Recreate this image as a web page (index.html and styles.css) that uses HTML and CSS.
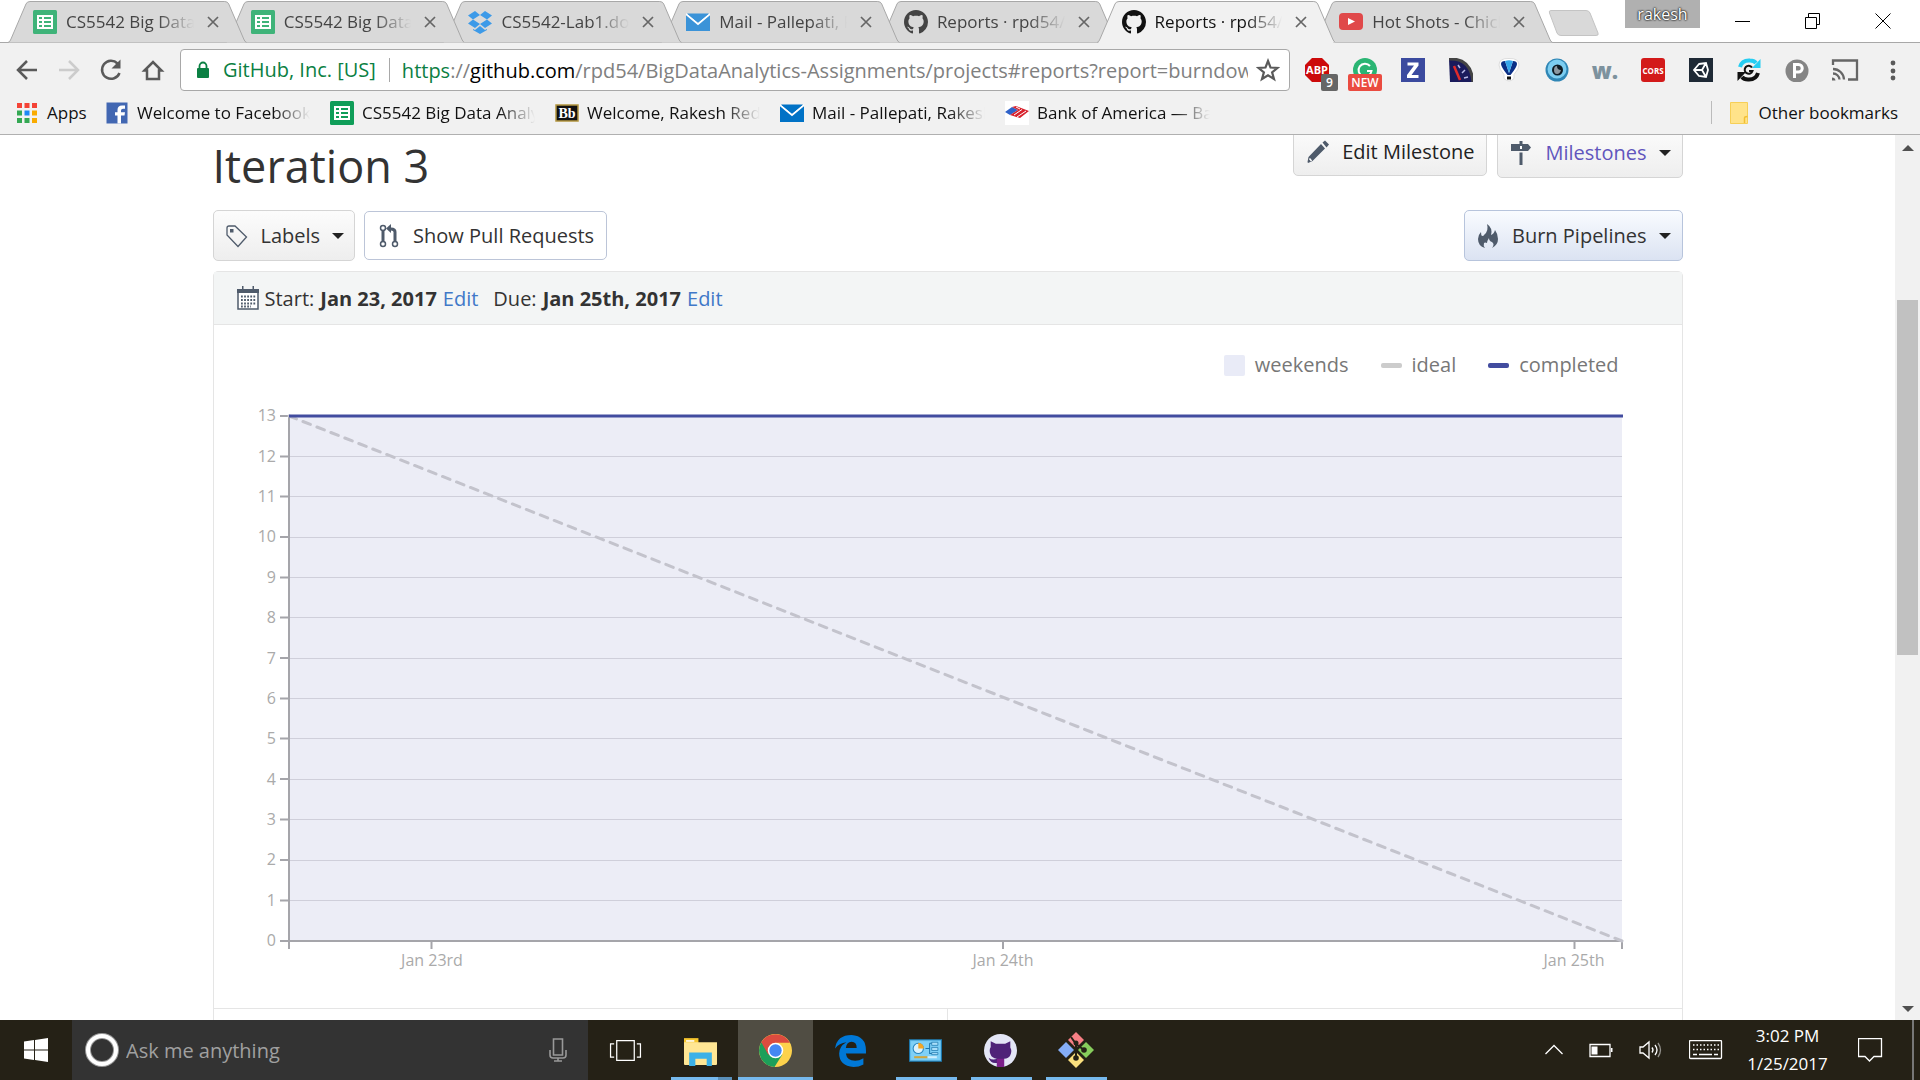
FILE: index.html
```html
<!DOCTYPE html>
<html lang="en">
<head>
<meta charset="utf-8">
<title>Reports · rpd54/BigDataAnalytics-Assignments</title>
<link rel="stylesheet" href="styles.css">
</head>
<body>
<svg class="defs" aria-hidden="true">
  <symbol id="tab-shape" viewBox="0 0 239 43" preserveAspectRatio="none"><path d="M0 42.500Q2 42 3 39L18 4Q19 1.500 22 1.500H217Q220 1.500 221 4L236 39Q237 42 239 42.500" vector-effect="non-scaling-stroke"/></symbol>
  <symbol id="x" viewBox="0 0 12 12"><path d="M1 1l10 10M11 1L1 11" fill="none" stroke="currentColor" stroke-width="1.700"/></symbol>
  <symbol id="sheet" viewBox="0 0 24 24"><rect width="24" height="24" rx="1.500" fill="currentColor"/><path d="M4 5h16v14H4z" fill="#fff"/><path d="M6 7h3v2H6zM11 7h7v2h-7zM6 11h3v2H6zM11 11h7v2h-7zM6 15h3v2H6zM11 15h7v2h-7z" fill="currentColor"/></symbol>
  <symbol id="mail" viewBox="0 0 24 24"><path d="M0 4h24v17H0z" fill="currentColor"/><path d="M0 4l12 10L24 4" fill="none" stroke="#fff" stroke-width="2"/><path d="M1 3.500h22L12 12.500z" fill="currentColor"/></symbol>
  <symbol id="octo" viewBox="0 0 16 16"><path fill="currentColor" d="M8 0C3.580 0 0 3.580 0 8c0 3.540 2.290 6.530 5.470 7.590.4.070.55-.17.55-.38 0-.19-.01-.82-.01-1.490-2.010.37-2.530-.49-2.690-.94-.09-.23-.48-.94-.82-1.130-.28-.15-.68-.52-.01-.53.63-.01 1.080.58 1.230.82.72 1.210 1.870.87 2.330.66.070-.52.28-.87.51-1.070-1.780-.2-3.640-.89-3.640-3.950 0-.87.31-1.590.82-2.150-.08-.2-.36-1.020.08-2.120 0 0 .67-.21 2.200.82.64-.18 1.320-.27 2-.27s1.360.09 2 .27c1.530-1.040 2.200-.82 2.200-.82.44 1.100.16 1.920.08 2.120.51.56.82 1.270.82 2.150 0 3.070-1.870 3.750-3.650 3.950.29.25.54.73.54 1.480 0 1.070-.01 1.930-.01 2.200 0 .21.150.46.55.38A8.010 8.010 0 0 0 16 8c0-4.420-3.580-8-8-8z"/></symbol>
</svg>

<header class="tabstrip">
  <div class="tabs" role="tablist">
    <div class="tab t1" role="tab"><svg class="shape"><use href="#tab-shape"/></svg><svg class="fav green"><use href="#sheet"/></svg><span class="label">CS5542 Big Data Analytics</span><button class="close" aria-label="Close tab"><svg><use href="#x"/></svg></button></div>
    <div class="tab t2" role="tab"><svg class="shape"><use href="#tab-shape"/></svg><svg class="fav green"><use href="#sheet"/></svg><span class="label">CS5542 Big Data Analytics</span><button class="close" aria-label="Close tab"><svg><use href="#x"/></svg></button></div>
    <div class="tab t3" role="tab"><svg class="shape"><use href="#tab-shape"/></svg><svg class="fav" viewBox="0 0 24 24"><path fill="#3d9ae8" d="M7 1l5 4-7 4.500L0 5.500zM17 1l7 4.500-5 4L12 5zM0 13.500l5-4 7 4.500-5 4zM19 9.500l5 4-7 4.500-5-4zM5 19l2 1 5-4 5 4 2-1v1l-7 4-7-4z"/></svg><span class="label">CS5542-Lab1.docx</span><button class="close" aria-label="Close tab"><svg><use href="#x"/></svg></button></div>
    <div class="tab t4" role="tab"><svg class="shape"><use href="#tab-shape"/></svg><svg class="fav blue"><use href="#mail"/></svg><span class="label">Mail - Pallepati, Rakesh</span><button class="close" aria-label="Close tab"><svg><use href="#x"/></svg></button></div>
    <div class="tab t5" role="tab"><svg class="shape"><use href="#tab-shape"/></svg><svg class="fav"><use href="#octo"/></svg><span class="label">Reports · rpd54/BigData</span><button class="close" aria-label="Close tab"><svg><use href="#x"/></svg></button></div>
    <div class="tab t6 active" role="tab" aria-selected="true"><svg class="shape"><use href="#tab-shape"/></svg><svg class="fav"><use href="#octo"/></svg><span class="label">Reports · rpd54/BigData</span><button class="close" aria-label="Close tab"><svg><use href="#x"/></svg></button></div>
    <div class="tab t7" role="tab"><svg class="shape"><use href="#tab-shape"/></svg><svg class="fav" viewBox="0 0 24 24"><rect y="3" width="24" height="17" rx="4" fill="#e0494a"/><path d="M9 8l7 3.500L9 15z" fill="#fff"/></svg><span class="label">Hot Shots - Chick</span><button class="close" aria-label="Close tab"><svg><use href="#x"/></svg></button></div>
  </div>
  <button class="newtab" aria-label="New tab"><svg viewBox="0 0 52 26"><path d="M3 .500H38Q41 .500 42 3L50 23Q51 25.500 48 25.500H13Q10 25.500 9 23L1.500 3Q.500 .500 3 .500z" fill="#d9d9d9" stroke="#c4c4c4"/></svg></button>
  <button class="profile">rakesh</button>
  <div class="winctl">
    <button aria-label="Minimize"><svg viewBox="0 0 16 16"><path d="M0 8.500h15"/></svg></button>
    <button aria-label="Restore"><svg viewBox="0 0 16 16"><path d="M.500 4.500h11v11H.500zM3.500 4V.500h11v11H12"/></svg></button>
    <button aria-label="Close"><svg viewBox="0 0 16 16"><path d="M.500 .500l15 15M15.500 .500l-15 15"/></svg></button>
  </div>
</header>

<nav class="toolbar" aria-label="Browser">
  <div class="navbtns">
    <button aria-label="Back"><svg viewBox="0 0 24 24"><path d="M22 12H3M12 3L3 12l9 9"/></svg></button>
    <button class="off" aria-label="Forward" disabled><svg viewBox="0 0 24 24"><path d="M2 12h19M12 3l9 9-9 9"/></svg></button>
    <button aria-label="Reload"><svg viewBox="0 0 24 24"><path d="M20.500 15A9 9 0 1 1 18.500 5.500"/><path d="M21.500 1.500v9h-9z" fill="currentColor" stroke="none"/></svg></button>
    <button aria-label="Home"><svg viewBox="0 0 24 24"><path d="M3.500 12.500L12 4l8.500 8.500H18V21H6v-8.500z"/></svg></button>
  </div>
  <div class="omnibox">
    <svg class="lock" viewBox="0 0 14 18"><rect x="1" y="7" width="12" height="10" rx="1" fill="currentColor"/><path d="M3.500 8V5a3.500 3.500 0 0 1 7 0v3" fill="none" stroke="currentColor" stroke-width="1.800"/></svg>
    <span class="site">GitHub, Inc. [US]</span>
    <div class="url" role="textbox" contenteditable="true" aria-label="Address"><span class="scheme">https</span>://<span class="host">github.com</span>/rpd54/BigDataAnalytics-Assignments/projects#reports?report=burndown</div>
    <button class="star" aria-label="Bookmark"><svg viewBox="0 0 24 24"><path d="M12 3l2.500 6.500 7 .400-5.400 4.400 1.900 6.700-6-3.800-6 3.800 1.900-6.700L2.500 9.900l7-.400z" fill="none" stroke="#5a5a5a" stroke-width="2.200"/></svg></button>
  </div>
  <div class="exts">
    <button aria-label="Adblock Plus"><svg viewBox="0 0 24 24"><path d="M7 0h10l7 7v10l-7 7H7l-7-7V7z" fill="#cc0a0a"/><text x="12" y="16" class="g-abp">ABP</text></svg><span class="badge count">9</span></button>
    <button aria-label="Grammarly"><svg viewBox="0 0 24 24"><circle cx="12" cy="12" r="12" fill="#2ab573"/><path d="M17 8a6.500 6.500 0 1 0 1.500 5H14" fill="none" stroke="#fff" stroke-width="2"/></svg><span class="badge new">NEW</span></button>
    <button aria-label="Zotero"><svg viewBox="0 0 24 24"><path d="M0 0h24v24H0z" fill="#3b4a9f"/><path d="M6.500 4.500h11v3L10.500 17h7v3H6v-3L13 7.500H6.500z" fill="#fff"/></svg></button>
    <button aria-label="Speed dial"><svg viewBox="0 0 24 24"><path d="M0 1Q22 0 24 24H1z" fill="#1a1b5c"/><path d="M0 1Q22 0 24 24" fill="none" stroke="#444" stroke-width="3"/><path d="M5 8l6 14" stroke="#e02b2b" stroke-width="2.500"/><path d="M9 7l2 3M16 12l-3 3M19 19l-4 1" stroke="#b9bbe8" stroke-width="1.500"/></svg></button>
    <button aria-label="Balloon"><svg viewBox="0 0 24 24"><path d="M2 7Q2 0 12 .500 22 0 22 7q0 4-5 9.500v4q-5 5-10 0v-4Q2 11 2 7z" fill="#fff" stroke="#ddd"/><path d="M4 6Q4 3 8 3l4 12 4-12q4 0 4 3 0 3-6.500 11h-3Q4 9 4 6z" fill="#0a2f86"/><path d="M8 3q4-1.500 8 0l-4 12z" fill="#36a6ea"/><path d="M10 18.500h4v3h-4z" fill="#111"/></svg></button>
    <button aria-label="Eye"><svg viewBox="0 0 24 24"><circle cx="12" cy="12" r="11.500" fill="#2f86b5"/><circle cx="12" cy="11" r="9.500" fill="#7ccdf0"/><circle cx="12.500" cy="12" r="5.500" fill="#0d1b24"/><path d="M12 8q0 4 4 4-1 4-4 4t-3-4 3-4" fill="#8c98a0"/></svg></button>
    <button aria-label="W"><span class="g-w">w.</span></button>
    <button aria-label="CORS"><svg viewBox="0 0 24 24"><rect width="24" height="24" rx="3" fill="#d31a1a"/><text x="12" y="16" class="g-cors">CORS</text></svg></button>
    <button aria-label="Cube"><svg viewBox="0 0 24 24"><path d="M0 0h24v24H0z" fill="#1f2a36"/><path d="M10 6l7-1 2 7-2 7-7-1-5-6zM5 12h8M13 12l4-7M13 12l4 7" fill="none" stroke="#fff" stroke-width="1.800"/></svg></button>
    <button aria-label="Sync"><svg viewBox="0 0 24 24"><path d="M3 9Q5 2 13 2.500q4 0 6 2.500" fill="none" stroke="#25cdf2" stroke-width="4"/><path d="M23.500 1v9H15z" fill="#25cdf2"/><path d="M21 15q-2 7-10 6.500-4 0-6-2.500" fill="none" stroke="#111" stroke-width="4"/><path d="M.500 23v-9H9z" fill="#111"/><path d="M15 9.500a4 4 0 1 0 .500 3.500H12" fill="none" stroke="#111" stroke-width="2"/></svg></button>
    <button aria-label="Pinterest"><svg viewBox="0 0 24 24"><circle cx="12" cy="13" r="11.500" fill="#858585"/><path d="M9.500 20V6.500h4a3.700 3.700 0 0 1 0 7.500h-4" fill="none" stroke="#fff" stroke-width="3"/></svg></button>
    <button aria-label="Cast"><svg class="cast" viewBox="0 0 28 24"><path d="M2 7V2.500h24v19H17M2 11a11 11 0 0 1 11 10.500M2 15.500a6.500 6.500 0 0 1 6.500 6" fill="none" stroke="#666" stroke-width="2.300"/><path d="M1 19.500a3.500 3.500 0 0 1 3.500 3H1z" fill="#666"/></svg></button>
    <button aria-label="Menu"><svg viewBox="0 0 24 24" fill="#5a5a5a"><circle cx="12" cy="5" r="2.400"/><circle cx="12" cy="13" r="2.400"/><circle cx="12" cy="20" r="2.400"/></svg></button>
  </div>
</nav>

<nav class="bookmarks" aria-label="Bookmarks">
  <a class="apps" href="#"><svg viewBox="0 0 20 20"><path fill="#f44336" d="M0 0h5v5H0zM7.500 0h5v5h-5zM15 0h5v5h-5z"/><path fill="#34a853" d="M0 7.500h5v5H0zM0 15h5v5H0zM7.500 15h5v5h-5z"/><path fill="#1e88f5" d="M7.500 7.500h5v5h-5z"/><path fill="#f9ab00" d="M15 7.500h5v5h-5zM15 15h5v5h-5z"/></svg>Apps</a>
  <a class="bm" href="#"><svg viewBox="0 0 24 24"><path d="M1.500 1.500h21v21h-21z" fill="#4267b2"/><path d="M12.500 22.500v-8H10v-3.200h2.500V9q0-4.500 4.500-4.500h3v3.200h-2q-2 0-2 1.800v1.800h4l-.500 3.200H16v8z" fill="#fff"/></svg><span>Welcome to Facebook</span></a>
  <a class="bm sheetgreen" href="#"><svg><use href="#sheet"/></svg><span>CS5542 Big Data Analytics</span></a>
  <a class="bm" href="#"><svg viewBox="0 0 24 24"><path d="M1 4h22v16H1z" fill="#111" stroke="#b3953f" stroke-width="1.500"/><text x="12" y="17" class="g-bb">Bb</text></svg><span>Welcome, Rakesh Reddy</span></a>
  <a class="bm mailblue" href="#"><svg><use href="#mail"/></svg><span>Mail - Pallepati, Rakesh</span></a>
  <a class="bm" href="#"><svg viewBox="0 0 24 24"><path d="M0 0h24v24H0z" fill="#fff"/><path d="M0 11l7-5 6 3-8 5z" fill="#2f62c9"/><path d="M7 6l4-1 13 5-9 7-10-3 8-5z" fill="#d8222d"/><path d="M9 14l8-5.500M12 16l9-6M11 6l4 2" stroke="#fff"/></svg><span>Bank of America — Banking</span></a>
  <a class="other" href="#"><svg viewBox="0 0 18 22"><path d="M.500 .500h17v21H.500z" fill="#ffe38a" stroke="#f6cf57"/><path d="M14.500 21v-5q0-1.500 3-1.500" fill="none" stroke="#f2bf35" stroke-width="1.500"/></svg>Other bookmarks</a>
</nav>

<div class="viewport">
  <main class="content">
    <div class="head">
      <h1>Iteration 3</h1>
      <button class="btn flat dark"><svg viewBox="0 0 24 24"><path fill="#4f5b6b" d="M16.500 2.500L19 .500l4 4-2.500 3zM15 4l4 4.500L6.500 21l-1 .500L2 23l-.500-1 1-5z"/><path d="M3.500 18.500l2 2.500" stroke="#fff" stroke-width="1.500"/></svg>Edit Milestone</button>
      <button class="btn purple"><svg viewBox="0 0 24 24"><path fill="#4f5b6b" d="M10.500 0h3v3h5.500l3 3.500-3 3.500H2V3h8.500zM10.500 11.500h3V24h-3z"/><path d="M11 5h2v3h-2z" fill="#fff"/></svg>Milestones<i class="caret"></i></button>
    </div>
    <div class="filters">
      <button class="btn labels"><svg viewBox="0 0 24 24"><path d="M2 4q0-2 2-2h6l11.500 11L13 22.500 2 11z" fill="none" stroke="#4f5b6b" stroke-width="1.300"/><path d="M5 5h3.500v3.500H5z" fill="#4f5b6b"/></svg>Labels<i class="caret"></i></button>
      <button class="btn flat white"><svg viewBox="0 0 24 24"><path d="M6 5v14" stroke="#4f5b6b" stroke-width="3"/><path d="M18 19V8q0-3-4-3h-2" fill="none" stroke="#4f5b6b" stroke-width="3"/><path d="M14 0v9L9 4.500z" fill="#4f5b6b"/><g fill="#fff" stroke="#4f5b6b" stroke-width="1.500"><circle cx="6" cy="4" r="2.500"/><circle cx="6" cy="20" r="2.500"/><circle cx="18" cy="20" r="2.500"/></g></svg>Show Pull Requests</button>
      <button class="btn burn"><svg viewBox="0 0 24 24"><path fill="#4f5b6b" d="M11 0q6 4 4 11 3-1 4-5 3 4 3 9 0 6-6 9 3-4 0-6-3-1-3-4-2 3-2 5-2-1-3 0-1 3 1 5-7-2-7-9 0-4 3-7 0 3 1 4 2 0 2-1 5-4 3-11z"/></svg>Burn Pipelines<i class="caret"></i></button>
    </div>
    <section class="card">
      <div class="dates">
        <svg viewBox="0 0 22 24"><path d="M1 4h20v19H1z" fill="#fff" stroke="#4f5b6b" stroke-width="1.500"/><path d="M0 3h22v4H0zM5 0h1.500v4H5zM15.500 0H17v4h-1.500z" fill="#4f5b6b"/><path d="M4 10.500h15M4 14h15M4 17.500h15M4 20.500h10" stroke="#4f5b6b" stroke-width="1.800" stroke-dasharray="1.800 1.300"/></svg>
        <span>Start:</span> <b>Jan 23, 2017</b> <a href="#">Edit</a> <span class="due">Due:</span> <b>Jan 25th, 2017</b> <a href="#">Edit</a>
      </div>
      <div class="legend">
        <span><i class="box"></i>weekends</span>
        <span><i class="dash"></i>ideal</span>
        <span><i class="dash done"></i>completed</span>
      </div>
      <svg class="chart" viewBox="0 0 1468 612" role="img" aria-label="Burndown chart">
        <path class="area" d="M75 20h1333v525H75z"/>
        <path class="grid" d="M75 60.500h1333M75 100.500h1333M75 141.500h1333M75 181.500h1333M75 221.500h1333M75 262.500h1333M75 302.500h1333M75 342.500h1333M75 383.500h1333M75 423.500h1333M75 464.500h1333M75 504.500h1333"/>
        <path class="axis" d="M75 19.500V553M66 20h9M66 60.500h9M66 100.500h9M66 141h9M66 181.500h9M66 221.500h9M66 262h9M66 302.500h9M66 342.500h9M66 383h9M66 423.500h9M66 464h9M66 504.500h9M66 545h1342v8M217.500 545v8M789 545v8M1360.500 545v8"/>
        <path class="ideal" d="M75 20L1408 545"/>
        <path class="complete" d="M75 20h1334"/>
        <g class="ylab"><text x="62" y="25">13</text><text x="62" y="66">12</text><text x="62" y="106">11</text><text x="62" y="146">10</text><text x="62" y="187">9</text><text x="62" y="227">8</text><text x="62" y="268">7</text><text x="62" y="308">6</text><text x="62" y="348">5</text><text x="62" y="389">4</text><text x="62" y="429">3</text><text x="62" y="469">2</text><text x="62" y="510">1</text><text x="62" y="550">0</text></g>
        <g class="xlab"><text x="218" y="570">Jan 23rd</text><text x="789" y="570">Jan 24th</text><text x="1360" y="570">Jan 25th</text></g>
      </svg>
      <div class="split"><div></div><div></div></div>
    </section>
  </main>
  <div class="scrollbar"><i class="up"></i><i class="thumb"></i><i class="down"></i></div>
</div>

<footer class="taskbar">
  <button class="start" aria-label="Start"><svg viewBox="0 0 24 24"><path fill="#fff" d="M0 3.400l10-1.400v9.500H0zM11 1.900L24 0v11.500H11zM0 12.500h10V22L0 20.600zM11 12.500h13V24l-13-1.900z"/></svg></button>
  <label class="search">
    <svg class="ring" viewBox="0 0 34 34"><circle cx="17" cy="17" r="14" fill="none" stroke="#999" stroke-width="6"/><circle cx="17" cy="17" r="14" fill="none" stroke="#fff" stroke-width="4"/></svg>
    <input type="text" placeholder="Ask me anything" aria-label="Search">
    <svg class="mic" viewBox="0 0 18 24"><path d="M4.500 1h9v16h-9zM1 12v5q0 3 3 3h10q3 0 3-3v-5M9 20v3M5 23h8" fill="none" stroke="#999" stroke-width="1.600"/></svg>
  </label>
  <div class="apps-row">
    <button aria-label="Task view"><svg viewBox="0 0 32 32"><path d="M7.500 6.500h17v19h-17zM5 9.500H1.500v13H5M27 9.500h3.500v13H27" fill="none" stroke="#fff" stroke-width="1.200"/></svg></button>
    <button class="open multi" aria-label="File Explorer"><svg viewBox="0 0 32 32"><path d="M0 4h14v8H0z" fill="#f7c62f"/><path d="M0 8h32v21q0 1-1 1H1q-1 0-1-1z" fill="#ffe694"/><path d="M2 6h8v1.500H2z" fill="#fff"/><path d="M5 18h22v13h-5v-7H11v7H5z" fill="#3bb1e8"/></svg></button>
    <button class="open current" aria-label="Chrome"><svg viewBox="0 0 32 32"><circle cx="16" cy="16" r="16" fill="#fdd24c"/><path d="M16 16L2.200 8A16 16 0 0 0 15 32l7.500-12z" fill="#1d9f5a"/><path d="M16 8.500H30A16 16 0 0 0 2.200 8L9 20l7-4z" fill="#dc4b3f"/><circle cx="16" cy="16" r="7.500" fill="#fff"/><circle cx="16" cy="16" r="6" fill="#4587f3"/></svg></button>
    <button aria-label="Edge"><svg viewBox="0 0 32 32"><path fill="#0078d7" d="M1 14Q3 1 17 1q14 1 14 15v3H11.500q1 7 9 7 4 0 8-2.500v6Q24 32 19 32 5 31 5 19q0-7 7-11-7 1-11 6zM11.500 13.500H22Q22 7.500 17 7.500q-5 .500-5.500 6z"/></svg></button>
    <button class="open" aria-label="Control Panel"><svg viewBox="0 0 32 32"><path d="M.500 5.500h31v21H.500z" fill="#69c2f0" stroke="#1c75a8"/><path d="M2 7h28v18H2z" fill="#7fd0f7"/><circle cx="9" cy="14" r="5" fill="#d9f1fd" stroke="#2786c0"/><path d="M9 14V8.500a5.500 5.500 0 0 1 5.500 5.500z" fill="#f5a623"/><path d="M16 14h4M20 9v10h3M20 9h3" stroke="#1d76ad" fill="none"/><path d="M22 8h6v3h-6zM22 13h6v3h-6zM22 18h6v2h-6z" fill="#a9def9" stroke="#1d76ad" stroke-width=".7"/><path d="M5 22.500h13" stroke="#d0a63e" stroke-width="2"/><path d="M18 22.500h9" stroke="#cfeefd" stroke-width="2"/></svg></button>
    <button class="open" aria-label="GitHub Desktop"><svg viewBox="0 0 32 32"><circle cx="16" cy="16" r="16" fill="#e4e6f6"/><path fill="#4f2378" d="M6.500 7l5 2.500h9l5-2.500v6q2 3 0 7.500-1.500 3-6 3.500v7.500h-7V28q-6 1-8-5 4 3 8 1-5-1-6-4-2-4 0-7.500z"/><path d="M12.500 24h7v8h-7z" fill="#7c1f8a"/></svg></button>
    <button class="open" aria-label="Git"><svg class="git" viewBox="0 0 36 36"><path d="M18 0l8 8-8 8-8-8z" fill="#f77f84"/><path d="M8 10l8 8-8 8-8-8z" fill="#85aef8"/><path d="M28 10l8 8-8 8-8-8z" fill="#87cd5c"/><path d="M18 20l8 8-8 8-8-8z" fill="#fbe07e"/><path d="M13 5l5 7v14M18 12l8 6" fill="none" stroke="#252116" stroke-width="2"/><g fill="#252116"><circle cx="18" cy="11" r="2.500"/><circle cx="18" cy="26" r="2.800"/><circle cx="26" cy="18" r="2.800"/></g></svg></button>
  </div>
  <div class="tray">
    <button aria-label="Show hidden icons"><svg width="18" height="18" viewBox="0 0 18 18"><path d="M.500 13L9 4.500 17.500 13"/></svg></button>
    <button aria-label="Battery"><svg width="24" height="18" viewBox="0 0 24 18"><path d="M1 3.500h20v12H1z"/><path d="M2.500 5.500h6v8h-6zM22 7h1.500v4H22z" fill="#fff" stroke="none"/></svg></button>
    <button aria-label="Volume"><svg width="24" height="20" viewBox="0 0 24 20"><path d="M1 7v6h3l6 5V2L4 7zM13 7.500q2 2.500 0 5M16 5q4 5 0 10"/><path d="M19 3q5 7 0 14" opacity=".5"/></svg></button>
    <button aria-label="Touch keyboard"><svg width="34" height="20" viewBox="0 0 34 20"><rect x=".5" y=".5" width="32" height="18" rx="1"/><path d="M4 5h26M4 9.500h26" stroke-dasharray="1.500 2"/><path d="M4 14.500h4M10 14.500h13M25 14.500h4"/></svg></button>
    <button class="clock"><time>3:02 PM<br>1/25/2017</time></button>
    <button aria-label="Notifications"><svg width="25" height="25" viewBox="0 0 25 25"><path d="M.500 .500h23v18H16L11.500 23 7 18.500H.500z"/></svg></button>
  </div>
  <button class="desktop" aria-label="Show desktop"></button>
</footer>
</body>
</html>
```
FILE: styles.css
```css
* { box-sizing: border-box; }
html, body { height: 100%; }
body {
  margin: 0;
  display: flex;
  flex-direction: column;
  overflow: hidden;
  background: #fff;
  color: #333;
  font-family: "Open Sans", "Noto Sans", sans-serif;
  font-size: 17px;
}
button {
  margin: 0;
  padding: 0;
  border: 0;
  background: none;
  color: inherit;
  font: inherit;
}
a { color: inherit; text-decoration: none; }
svg { display: block; flex: none; }
.defs { position: absolute; width: 0; height: 0; }

/* Tab strip */
.tabstrip {
  flex: none;
  display: flex;
  height: 43px;
  padding: 0 2px 0 8px;
  background: linear-gradient(#a8a8a8, #a8a8a8) bottom / 100% 1px no-repeat #fff;
}
.tabs { flex: 0 1 1524px; display: flex; min-width: 0; }
.tab {
  position: relative;
  flex: 1 1 0;
  min-width: 0;
  display: flex;
  align-items: center;
  padding-left: 25px;
  color: #444;
}
.shape {
  position: absolute;
  left: 0;
  top: 0;
  width: calc(100% + 21px);
  height: 43px;
  fill: #d9d9d9;
  stroke: #a8a8a8;
}
.active .shape { fill: #f1f1f1; }
.active { color: #111; }
.active::after {
  content: "";
  position: absolute;
  left: 2px;
  right: -19px;
  bottom: 0;
  height: 1px;
  background: #f1f1f1;
}
.t1 { z-index: 7; }
.t2 { z-index: 6; }
.t3 { z-index: 5; }
.t4 { z-index: 4; }
.t5 { z-index: 3; }
.t6 { z-index: 8; }
.t7 { z-index: 1; }
.fav { position: relative; width: 24px; height: 24px; }
.green { color: #3fb379; }
.blue { color: #3b93d8; }
.label {
  position: relative;
  flex: 1;
  min-width: 0;
  margin-left: 9px;
  overflow: hidden;
  white-space: nowrap;
  -webkit-mask-image: linear-gradient(to left, transparent, #000 36px);
  mask-image: linear-gradient(to left, transparent, #000 36px);
}
.close { position: relative; margin: 0 7px 0 13px; color: #666; }
.close svg { width: 12px; height: 12px; }
.newtab { align-self: flex-start; margin: 10px 0 0 16px; }
.newtab svg { width: 52px; height: 26px; }
.profile {
  width: 75px;
  height: 28px;
  margin-left: auto;
  background: #b0b0b0;
  color: #fff;
  font-size: 16px;
  text-shadow: 0 0 2px #000, 0 0 2px #000;
}
.winctl { display: flex; margin-left: 8px; height: 41px; }
.winctl button { width: 70px; display: flex; align-items: center; justify-content: center; }
.winctl svg { width: 16px; height: 16px; fill: none; stroke: #000; stroke-width: 1; }

/* Toolbar */
.toolbar {
  flex: none;
  display: flex;
  align-items: center;
  height: 54px;
  padding: 0 3px 0 6px;
  background: #f1f1f1;
}
.navbtns { display: flex; width: 174px; padding-left: 9px; gap: 18px; }
.navbtns svg { width: 24px; height: 24px; fill: none; stroke: currentColor; stroke-width: 2.5; }
.navbtns button { color: #5a5a5a; }
.navbtns .off { color: #ccc; }
.omnibox {
  flex: 1;
  min-width: 0;
  height: 42px;
  display: flex;
  align-items: center;
  padding: 0 9px 0 15px;
  background: #fff;
  border: 1px solid #a8a8a8;
  border-radius: 4px;
  font-size: 20px;
}
.lock { width: 14px; height: 18px; color: #0b8043; }
.site {
  flex: none;
  margin-left: 13px;
  padding-right: 13px;
  border-right: 1px solid #a8a8a8;
  line-height: 24px;
  color: #0b8043;
}
.url {
  flex: 1;
  min-width: 0;
  margin: 0 8px 0 12px;
  overflow: hidden;
  white-space: nowrap;
  color: #808080;
}
.scheme { color: #0b8043; }
.host { color: #000; }
.star svg { width: 24px; height: 24px; }
.exts { display: flex; padding-left: 3px; }
.exts button {
  position: relative;
  width: 48px;
  height: 24px;
  display: flex;
  align-items: center;
  justify-content: center;
}
.exts svg { width: 24px; height: 24px; }
.exts .cast { width: 28px; }
.badge {
  position: absolute;
  top: 16px;
  height: 17px;
  border-radius: 2px;
  color: #fff;
  font-size: 12px;
  font-weight: 600;
  line-height: 17px;
}
.count { left: 28px; width: 17px; background: #666; }
.new { left: 7px; width: 34px; background: #ea4b40; }
.g-abp, .g-cors, .g-bb { fill: #fff; text-anchor: middle; font-weight: 700; }
.g-abp { font-size: 11px; }
.g-cors { font-size: 8px; }
.g-bb { font-family: "Liberation Serif", serif; font-size: 14px; }
.g-w { color: #7d929e; font-size: 22px; font-weight: 800; line-height: 20px; }

/* Bookmarks */
.bookmarks {
  flex: none;
  display: flex;
  align-items: center;
  height: 38px;
  padding: 0 22px 6px 17px;
  background: #f1f1f1;
  border-bottom: 1px solid #b0b0b0;
  color: #111;
}
.bookmarks a { display: flex; align-items: center; white-space: nowrap; }
.apps { width: 88px; gap: 10px; }
.apps svg { width: 20px; height: 20px; }
.bm { flex: 0 1 225px; min-width: 0; gap: 8px; padding-right: 20px; }
.bm svg { width: 24px; height: 24px; }
.bm span {
  flex: 1;
  min-width: 0;
  overflow: hidden;
  -webkit-mask-image: linear-gradient(to left, transparent, #000 36px);
  mask-image: linear-gradient(to left, transparent, #000 36px);
}
.sheetgreen svg { color: #0f9d58; }
.mailblue svg { color: #0072c6; }
.bookmarks .other { margin-left: auto; gap: 10px; padding-left: 18px; border-left: 1px solid #bbb; }
.other svg { width: 18px; height: 22px; }

/* Page */
.viewport { flex: 1; min-height: 0; display: flex; overflow: hidden; }
.content { flex: 1; min-width: 0; max-width: 1470px; margin: 0 auto; }
.head { display: flex; align-items: flex-start; height: 83px; margin-top: -8px; }
h1 {
  margin: 0 auto 0 0;
  color: #333;
  font-size: 45px;
  font-weight: 400;
  line-height: 78px;
}
.btn {
  height: 51px;
  display: flex;
  align-items: center;
  gap: 12px;
  padding: 0 11px;
  border: 1px solid #d5d5d5;
  border-radius: 5px;
  background: linear-gradient(#fcfcfc, #eee);
  color: #333;
  font-size: 20px;
  font-weight: 500;
  white-space: nowrap;
}
.btn svg { width: 24px; height: 24px; }
.flat { height: 49px; padding: 0 12px; }
.dark { color: #222; margin-right: 10px; }
.purple { color: #6155bd; }
.labels { padding-right: 10px; }
.white { background: #fff; border-color: #bcc5d8; }
.burn { margin-left: auto; border-color: #b7c4dc; background: linear-gradient(#f9fbff, #dbe3f2); }
.caret {
  border: 6px solid transparent;
  border-top-color: #222;
  border-bottom: 0;
}
.filters { display: flex; align-items: center; gap: 9px; height: 51px; margin-bottom: 10px; }
.card { border: 1px solid #e5e5e5; border-radius: 5px 5px 0 0; }
.dates {
  display: flex;
  align-items: center;
  gap: 6px;
  height: 53px;
  padding: 0 23px;
  background: #f3f5f5;
  border-bottom: 1px solid #e5e5e5;
  font-size: 20px;
}
.dates svg { width: 22px; height: 24px; }
.dates a { color: #4078c8; }
.due { margin-left: 9px; }
.legend {
  display: flex;
  justify-content: flex-end;
  align-items: flex-start;
  gap: 32px;
  height: 71px;
  padding: 25px 63px 0 0;
  color: #777;
  font-size: 20px;
  line-height: 30px;
}
.legend span { display: flex; align-items: center; gap: 10px; }
.legend i { width: 21px; height: 5px; border-radius: 2px; }
.legend .box { height: 21px; background: #e9ebf7; }
.dash { background: #ccc; }
.legend .done { background: #424c9f; }
.chart { width: 100%; height: auto; }
.area { fill: #ecedf6; }
.grid { stroke: #cfcfda; fill: none; }
.axis { stroke: #a5a5aa; fill: none; stroke-width: 2; }
.ideal { stroke: #c3c3cc; stroke-width: 3; stroke-dasharray: 8 7; stroke-linecap: round; }
.complete { stroke: #424c9f; stroke-width: 3; }
.ylab, .xlab { fill: #aaa; font-size: 16px; }
.ylab { text-anchor: end; }
.xlab { text-anchor: middle; }
.split { display: flex; height: 60px; border-top: 1px solid #e5e5e5; }
.split div { flex: 1; }
.split div + div { border-left: 1px solid #e5e5e5; }
.scrollbar {
  flex: none;
  width: 25px;
  display: flex;
  flex-direction: column;
  align-items: center;
  padding: 10px 0 8px;
  background: #f1f1f1;
}
.up, .down { border: 6px solid transparent; }
.up { border-top: 0; border-bottom-color: #505050; }
.down { border-bottom: 0; border-top-color: #505050; margin-top: auto; }
.thumb { width: 21px; height: 41%; margin-top: 149px; background: #c1c1c1; }

/* Taskbar */
.taskbar { flex: none; display: flex; height: 60px; background: #252116; color: #fff; }
.start { width: 72px; display: flex; align-items: center; justify-content: center; }
.start svg { width: 24px; height: 24px; }
.search {
  flex: 0 1 516px;
  min-width: 0;
  display: flex;
  align-items: center;
  padding: 0 21px 0 13px;
  background: #333;
}
.ring { width: 34px; height: 34px; }
.search input {
  flex: 1;
  min-width: 0;
  padding: 0 7px;
  border: 0;
  background: none;
  color: #fff;
  font: inherit;
  font-size: 20px;
}
.search input::placeholder { color: #a0a0a0; opacity: 1; }
.mic { width: 18px; height: 24px; }
.apps-row { display: flex; }
.apps-row button {
  position: relative;
  width: 75px;
  display: flex;
  align-items: center;
  justify-content: center;
}
.apps-row svg { width: 33px; height: 33px; }
.apps-row .git { width: 36px; height: 36px; }
.open::after {
  content: "";
  position: absolute;
  left: 8px;
  right: 6px;
  bottom: 0;
  height: 3px;
  background: #76b9ed;
}
.multi::after { background: linear-gradient(to left, #5a8fb8 14px, #76b9ed 14px); }
.current { background: #504d43; }
.current::after { left: 0; right: 0; }
.tray { display: flex; align-items: center; gap: 26px; margin-left: auto; padding-right: 29px; }
.tray svg { fill: none; stroke: #fff; stroke-width: 1.3; }
.clock { width: 85px; margin: 0 2px 0 -4px; text-align: center; font-size: 17px; line-height: 28px; white-space: nowrap; }
.desktop { width: 8px; border-left: 2px solid #777; }
```
